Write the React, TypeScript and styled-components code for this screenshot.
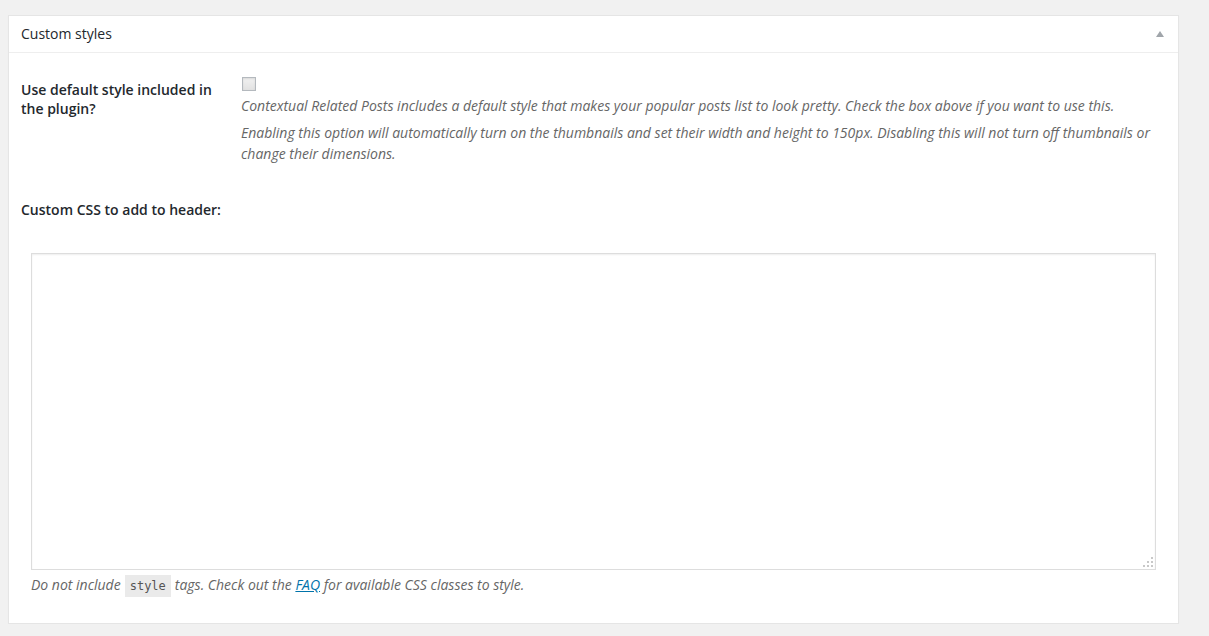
import { createGlobalStyle, styled } from "styled-components";

const GlobalStyle = createGlobalStyle`
  html, body {
    margin: 0;
    padding: 0;
    background: #f1f1f1;
  }
  body {
    font-family: "Open Sans", "Liberation Sans", sans-serif;
    font-size: 13px;
    color: #444;
  }
`;

const Wrap = styled.div`
  padding: 15px 30px 0 8px;
`;

const Postbox = styled.div`
  background: #fff;
  border: 1px solid #e5e5e5;
  box-shadow: 0 1px 1px rgba(0, 0, 0, 0.04);
`;

const Header = styled.div`
  display: flex;
  align-items: center;
  justify-content: space-between;
  border-bottom: 1px solid #eee;
`;

const Title = styled.h2`
  margin: 0;
  padding: 8px 12px;
  font-size: 14px;
  font-weight: 400;
  line-height: 1.4;
  color: #23282d;
`;

const Toggle = styled.span`
  display: flex;
  width: 36px;
  height: 36px;
  align-items: center;
  justify-content: center;
  color: #a0a5aa;
`;

const Inside = styled.div`
  padding: 0 12px 11px;
  margin-top: 8px;
`;

const FormTable = styled.table`
  width: 100%;
  border-collapse: collapse;
`;

const Th = styled.th<{ $tight?: boolean }>`
  width: 200px;
  padding: ${(p) => (p.$tight ? "22px 10px 18px 0" : "20px 10px 20px 0")};
  text-align: left;
  vertical-align: top;
  font-size: 14px;
  font-weight: 600;
  line-height: 1.35;
  color: #23282d;
`;

const Td = styled.td`
  padding: 15px 10px;
  vertical-align: top;
  font-size: 14px;
  line-height: 1.3;
`;

const Checkbox = styled.input`
  appearance: none;
  display: block;
  width: 14px;
  height: 14px;
  margin: 1px 0 0 1px;
  border: 1px solid #b4b9be;
  background: linear-gradient(#f1f1f1, #e2e2e2);
  box-shadow: inset 0 1px 2px rgba(0, 0, 0, 0.1);
`;

const Description = styled.p<{ $gap?: number }>`
  margin: ${(p) => p.$gap ?? 4}px 0 0;
  font-size: 14px;
  line-height: 1.5;
  font-style: italic;
  color: #666;
`;

const EditorBox = styled.div`
  position: relative;
`;

const Editor = styled.textarea`
  display: block;
  box-sizing: border-box;
  width: 100%;
  height: 317px;
  margin: 0;
  padding: 2px 6px;
  border: 1px solid #ddd;
  box-shadow: inset 0 1px 2px rgba(0, 0, 0, 0.07);
  background: #fff;
  resize: none;
  font-family: "DejaVu Sans Mono", monospace;
  font-size: 13px;
`;

const Grip = styled.svg`
  position: absolute;
  right: 2px;
  bottom: 2px;
`;

const Code = styled.code`
  display: inline-block;
  margin: 0 4px;
  padding: 1px 5px 1px;
  background: #eaeaea;
  font-family: "DejaVu Sans Mono", monospace;
  font-size: 12px;
  font-style: normal;
  line-height: 20px;
  color: #555;
`;

const Link = styled.a`
  color: #0073aa;
  text-decoration: underline;
`;

export default function App() {
  return (
    <Wrap>
      <GlobalStyle />
      <Postbox>
        <Header>
          <Title>Custom styles</Title>
          <Toggle>
            <svg width="10" height="8" viewBox="0 0 10 8">
              <path d="M5 1 L9 7 L1 7 Z" fill="currentColor" />
            </svg>
          </Toggle>
        </Header>
        <Inside>
          <FormTable>
            <tbody>
              <tr>
                <Th>Use default style included in the plugin?</Th>
                <Td>
                  <Checkbox type="checkbox" />
                  <Description>
                    Contextual Related Posts includes a default style that makes your popular posts list to look pretty. Check the box above if you want to use this.
                  </Description>
                  <Description $gap={6}>
                    Enabling this option will automatically turn on the thumbnails and set their width and height to 150px. Disabling this will not turn off thumbnails or change their dimensions.
                  </Description>
                </Td>
              </tr>
              <tr>
                <Th colSpan={2} $tight>
                  Custom CSS to add to header:
                </Th>
              </tr>
              <tr>
                <Td colSpan={2}>
                  <EditorBox>
                    <Editor />
                    <Grip width="12" height="12" viewBox="0 0 12 12">
                      {[
                        [9, 1],
                        [5, 5],
                        [9, 5],
                        [1, 9],
                        [5, 9],
                        [9, 9],
                      ].map(([x, y]) => (
                        <rect key={`${x}-${y}`} x={x} y={y} width="2" height="2" fill="#c8c8c8" />
                      ))}
                    </Grip>
                  </EditorBox>
                  <Description>
                    Do not include<Code>style</Code>tags. Check out the <Link href="#">FAQ</Link> for available CSS classes to style.
                  </Description>
                </Td>
              </tr>
            </tbody>
          </FormTable>
        </Inside>
      </Postbox>
    </Wrap>
  );
}
